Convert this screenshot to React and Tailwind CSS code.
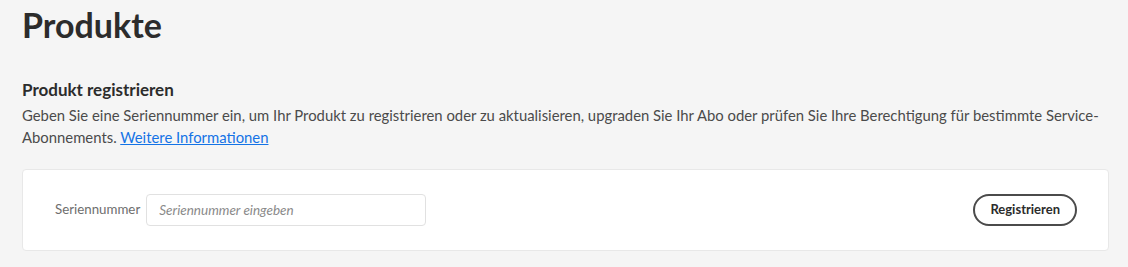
export default function App() {
    return (
        <div className="min-h-[267px] w-full bg-[#f5f5f5] px-[22px] pt-[4px] text-[#2c2c2c] font-['Lato','Open_Sans',sans-serif]">

            {/* Title */}
            <h1 className="text-[34px] leading-[42px] font-bold text-[#2c2c2c]">
                Produkte
            </h1>

            {/* Register section */}
            <div className="mt-[33px]">
                <h2 className="text-[17px] leading-[22px] font-bold text-[#2c2c2c]">
                    Produkt registrieren
                </h2>
                <p className="mt-[3px] text-[14.85px] leading-[22px] text-[#4b4b4b]">
                    Geben Sie eine Seriennummer ein, um Ihr Produkt zu registrieren oder zu aktualisieren, upgraden Sie Ihr Abo oder prüfen Sie Ihre Berechtigung für bestimmte Service-Abonnements.{" "}
                    <a href="#" className="text-[#1473e6] underline">Weitere Informationen</a>
                </p>
            </div>

            {/* Card */}
            <div className="mt-[21px] mr-[-3px] h-[82px] bg-white border border-[#e8e8e8] rounded-[4px] flex items-center justify-between pl-[32px] pr-[31px]">
                <div className="flex items-center gap-[6px]">
                    <label className="text-[13.3px] text-[#6e6e6e]">Seriennummer</label>
                    <input
                        placeholder="Seriennummer eingeben"
                        className="w-[280px] h-[32px] border border-[#e1e1e1] rounded-[4px] px-[12px] text-[13.5px] italic placeholder:text-[#8a8a8a] outline-none"
                    />
                </div>
                <button className="h-[32px] px-[15px] rounded-full border-2 border-[#4b4b4b] text-[13px] font-bold text-[#2c2c2c]">
                    Registrieren
                </button>
            </div>

        </div>
    );
}
